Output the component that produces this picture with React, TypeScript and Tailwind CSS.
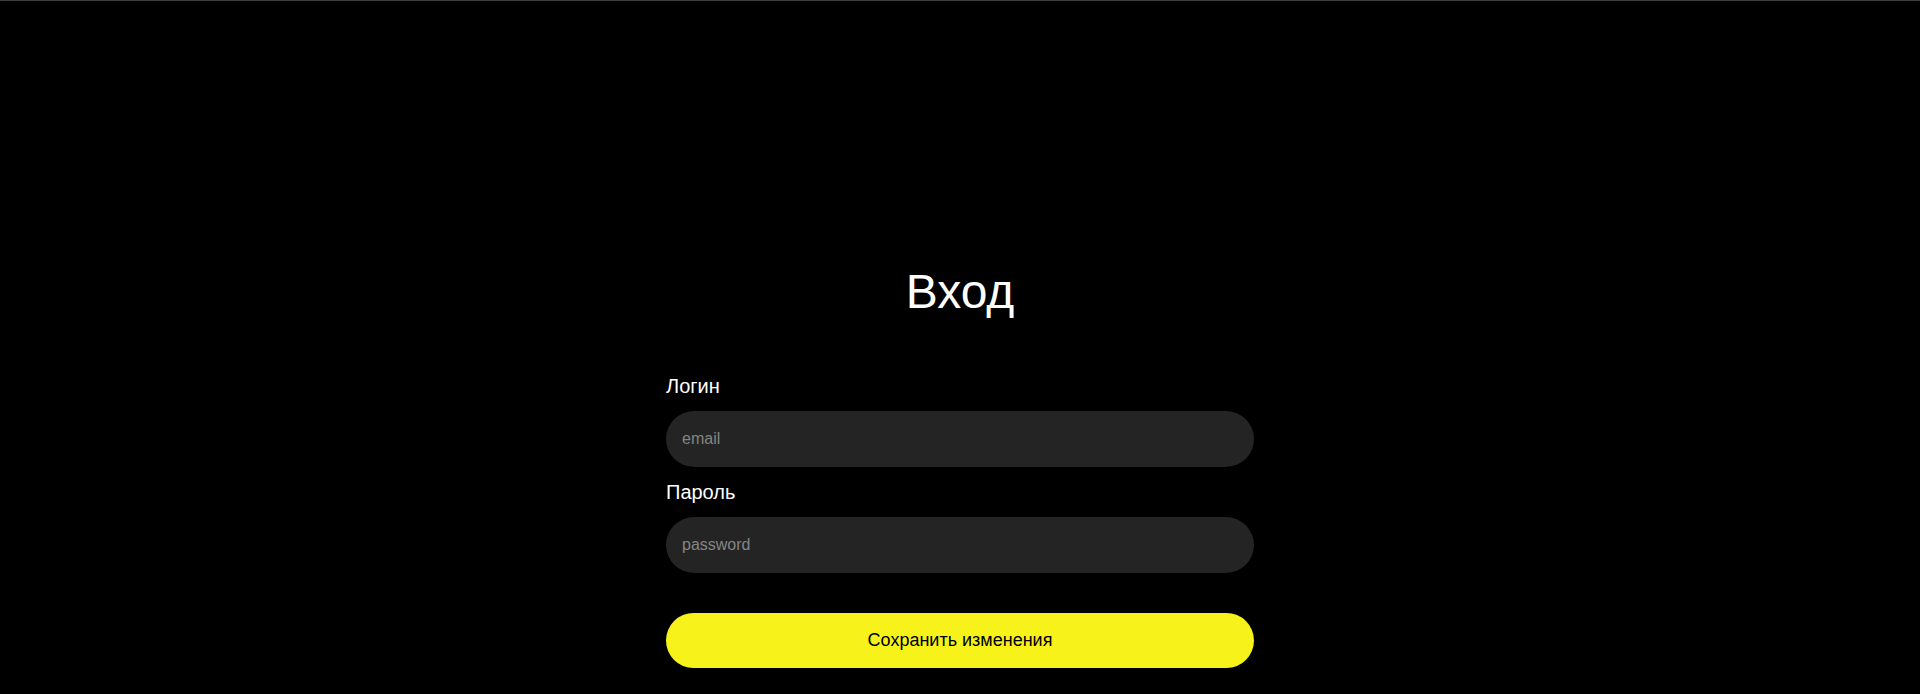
export default function App() {
  return (
    <div className="min-h-[694px] w-full bg-black border-t border-[#3b403e] font-['Liberation_Sans',Arial,sans-serif]">
      <div className="mx-auto flex w-[588px] flex-col pt-[267px]">
        <h1 className="text-center text-[48px] leading-[48px] font-normal text-white">Вход</h1>
        <form className="mt-[56px] flex flex-col" onSubmit={(e) => e.preventDefault()}>
          <label className="text-[20px] leading-[28px] text-white">Логин</label>
          <input
            type="text"
            placeholder="email"
            className="mt-[11px] h-[56px] w-full rounded-full bg-[#242424] px-4 text-[16px] text-white placeholder:text-[#858585] outline-none"
          />
          <label className="mt-[11px] text-[20px] leading-[28px] text-white">Пароль</label>
          <input
            type="password"
            placeholder="password"
            className="mt-[11px] h-[56px] w-full rounded-full bg-[#242424] px-4 text-[16px] text-white placeholder:text-[#858585] outline-none"
          />
          <button
            type="submit"
            className="mt-[40px] h-[55px] w-full rounded-full bg-[#f7f31a] text-[18px] text-black"
          >
            Сохранить изменения
          </button>
        </form>
      </div>
    </div>
  );
}
